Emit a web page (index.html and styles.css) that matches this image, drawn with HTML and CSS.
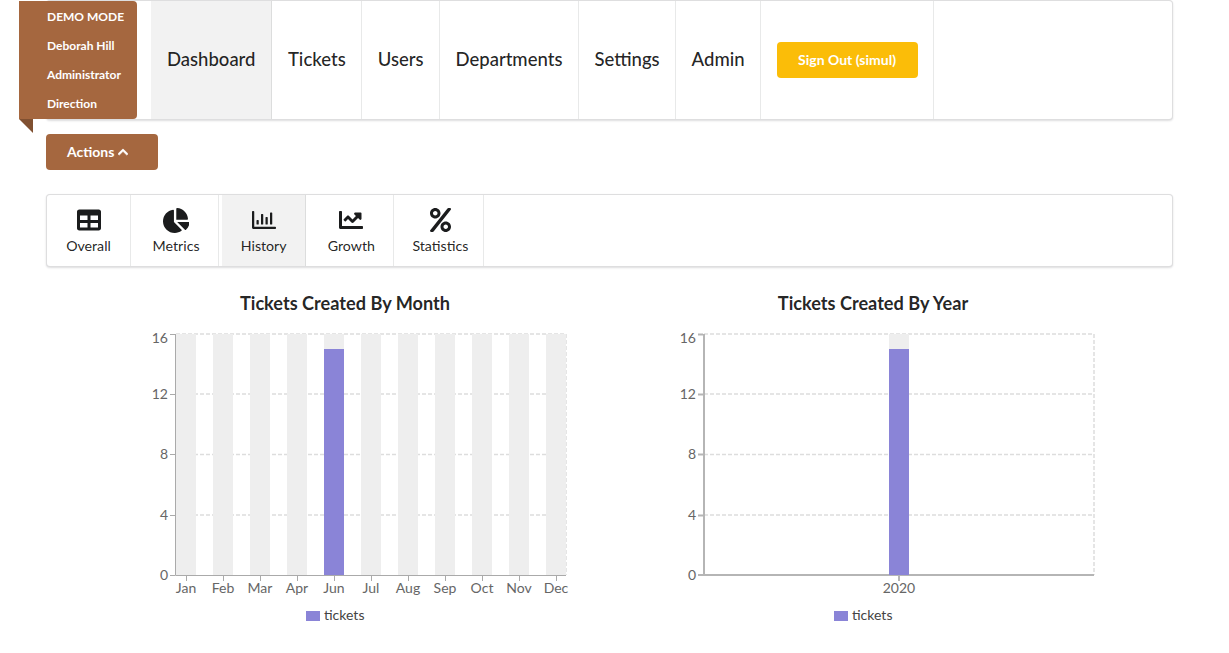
FILE: index.html
```html
<!DOCTYPE html>
<html lang="en">
<head>
<meta charset="utf-8">
<title>Dashboard</title>
<link rel="stylesheet" href="styles.css">
</head>
<body>
<div class="page">
  <nav class="menu main-menu">
    <div class="ribbon">
      <span>DEMO MODE</span>
      <span>Deborah Hill</span>
      <span>Administrator</span>
      <span>Direction</span>
    </div>
    <a class="nav-item active">Dashboard</a>
    <a class="nav-item">Tickets</a>
    <a class="nav-item">Users</a>
    <a class="nav-item">Departments</a>
    <a class="nav-item">Settings</a>
    <a class="nav-item">Admin</a>
    <div class="nav-item button-item"><button class="btn btn-yellow">Sign Out (simul)</button></div>
  </nav>

  <button class="btn btn-brown actions">Actions
    <svg class="chevron" viewBox="0 0 448 512"><path fill="currentColor" stroke="currentColor" stroke-width="30" d="M240.971 130.524l194.343 194.343c9.373 9.373 9.373 24.569 0 33.941l-22.667 22.667c-9.357 9.357-24.522 9.375-33.901.04L224 227.495 69.255 381.516c-9.379 9.335-24.544 9.317-33.901-.04l-22.667-22.667c-9.373-9.373-9.373-24.569 0-33.941L207.03 130.525c9.372-9.373 24.568-9.373 33.941-.001z"/></svg>
  </button>

  <div class="menu tabs">
    <a class="tab">
      <svg class="tab-icon" viewBox="0 0 512 512"><path d="M464 32H48C21.49 32 0 53.49 0 80v352c0 26.51 21.49 48 48 48h416c26.51 0 48-21.49 48-48V80c0-26.51-21.49-48-48-48zM224 416H64v-96h160v96zm0-160H64v-96h160v96zm224 160H288v-96h160v96zm0-160H288v-96h160v96z"/></svg>
      <span>Overall</span>
    </a>
    <a class="tab">
      <svg class="tab-icon tab-icon-wide" viewBox="0 0 544 512"><path d="M527.79 288H290.5l158.03 158.03c6.04 6.04 15.98 6.53 22.19.68 38.7-36.46 65.32-85.61 73.13-140.86 1.34-9.46-6.51-17.85-16.06-17.85zm-15.83-64.8C503.72 103.74 408.26 8.28 288.8.04 279.68-.59 272 7.1 272 16.24V240h223.77c9.14 0 16.82-7.68 16.19-16.8zM224 288V50.71c0-9.55-8.39-17.4-17.84-16.06C86.99 51.49-4.1 155.6.14 280.37 4.5 408.51 114.83 513.59 243.03 511.98c50.4-.63 96.97-16.87 135.26-44.03 7.9-5.6 8.42-17.23 1.57-24.08L224 288z"/></svg>
      <span>Metrics</span>
    </a>
    <a class="tab active">
      <svg class="tab-icon" viewBox="0 0 512 512"><path d="M396.8 352h22.4c6.4 0 12.8-6.4 12.8-12.8V108.8c0-6.4-6.4-12.8-12.8-12.8h-22.4c-6.4 0-12.8 6.4-12.8 12.8v230.4c0 6.4 6.4 12.8 12.8 12.8zm-192 0h22.4c6.4 0 12.8-6.4 12.8-12.8V140.8c0-6.4-6.4-12.8-12.8-12.8h-22.4c-6.4 0-12.8 6.4-12.8 12.8v198.4c0 6.4 6.4 12.8 12.8 12.8zm96 0h22.4c6.4 0 12.8-6.4 12.8-12.8V204.8c0-6.4-6.4-12.8-12.8-12.8h-22.4c-6.4 0-12.8 6.4-12.8 12.8v134.4c0 6.4 6.4 12.8 12.8 12.8zM496 400H48V80c0-8.84-7.16-16-16-16H16C7.16 64 0 71.16 0 80v336c0 17.67 14.33 32 32 32h464c8.84 0 16-7.16 16-16v-16c0-8.84-7.16-16-16-16zm-387.2-48h22.4c6.4 0 12.8-6.4 12.8-12.8v-70.4c0-6.4-6.4-12.8-12.8-12.8h-22.4c-6.4 0-12.8 6.4-12.8 12.8v70.4c0 6.4 6.4 12.8 12.8 12.8z"/></svg>
      <span>History</span>
    </a>
    <a class="tab">
      <svg class="tab-icon" viewBox="0 0 512 512"><path d="M496 384H64V80c0-8.84-7.16-16-16-16H16C7.16 64 0 71.16 0 80v336c0 17.67 14.33 32 32 32h464c8.84 0 16-7.16 16-16v-32c0-8.84-7.16-16-16-16zM464 96H345.94c-21.38 0-32.09 25.85-16.97 40.97l32.4 32.4L288 242.75l-73.37-73.37c-12.5-12.5-32.76-12.5-45.25 0l-68.69 68.69c-6.25 6.25-6.25 16.38 0 22.63l22.62 22.62c6.25 6.25 16.38 6.25 22.63 0L192 237.25l73.37 73.37c12.5 12.5 32.76 12.5 45.25 0l96-96 32.4 32.4c15.12 15.12 40.97 4.41 40.97-16.97V112c.01-8.84-7.15-16-15.99-16z"/></svg>
      <span>Growth</span>
    </a>
    <a class="tab">
      <svg class="tab-icon" viewBox="0 0 448 512"><path d="M112 224c61.9 0 112-50.1 112-112S173.9 0 112 0 0 50.1 0 112s50.1 112 112 112zm0-160c26.5 0 48 21.5 48 48s-21.5 48-48 48-48-21.5-48-48 21.5-48 48-48zm224 224c-61.9 0-112 50.1-112 112s50.1 112 112 112 112-50.1 112-112-50.1-112-112-112zm0 160c-26.5 0-48-21.5-48-48s21.5-48 48-48 48 21.5 48 48-21.5 48-48 48zM392.3.2l31.6.1c19.4.1 30.8 21.8 19.9 37.9L77.4 501.6a23.95 23.95 0 0 1-19.6 10.2l-33.4-.1c-19.5 0-30.9-21.9-19.7-37.8l368-463.7C377.2 4 384.5.2 392.3.2z"/></svg>
      <span>Statistics</span>
    </a>
  </div>

  <div class="charts">
    <section class="chart">
      <h3 class="chart-title">Tickets Created By Month</h3>
      <svg class="plot" viewBox="81 320 528 310">
        <g class="grid">
          <path d="M176 334H566M176 394H566M176 454.5H566M176 515H566M566 334V575"/>
        </g>
        <g class="axis">
          <path d="M175.5 334V575.5H566M170 334.5H175M170 394.5H175M170 454.5H175M170 515.5H175M170 575.5H175"/>
          <path d="M186.5 575V581M223.5 575V581M260.5 575V581M297.5 575V581M334.5 575V581M371.5 575V581M408.5 575V581M445.5 575V581M482.5 575V581M519.5 575V581M556.5 575V581"/>
        </g>
        <g class="bars-bg">
          <rect x="176" y="334" width="20" height="241"/>
          <rect x="213" y="334" width="20" height="241"/>
          <rect x="250" y="334" width="20" height="241"/>
          <rect x="287" y="334" width="20" height="241"/>
          <rect x="324" y="334" width="20" height="241"/>
          <rect x="361" y="334" width="20" height="241"/>
          <rect x="398" y="334" width="20" height="241"/>
          <rect x="435" y="334" width="20" height="241"/>
          <rect x="472" y="334" width="20" height="241"/>
          <rect x="509" y="334" width="20" height="241"/>
          <rect x="546" y="334" width="20" height="241"/>
        </g>
        <rect class="bar" x="324" y="349" width="20" height="226"/>
        <g class="y-labels">
          <text x="168" y="343">16</text>
          <text x="168" y="399">12</text>
          <text x="168" y="459">8</text>
          <text x="168" y="520">4</text>
          <text x="168" y="580">0</text>
        </g>
        <g class="x-labels">
          <text x="186" y="593">Jan</text>
          <text x="223" y="593">Feb</text>
          <text x="260" y="593">Mar</text>
          <text x="297" y="593">Apr</text>
          <text x="334" y="593">Jun</text>
          <text x="371" y="593">Jul</text>
          <text x="408" y="593">Aug</text>
          <text x="445" y="593">Sep</text>
          <text x="482" y="593">Oct</text>
          <text x="519" y="593">Nov</text>
          <text x="556" y="593">Dec</text>
        </g>
        <rect class="bar" x="306" y="611" width="14" height="10"/>
        <text class="legend" x="324" y="620">tickets</text>
      </svg>
    </section>
    <section class="chart">
      <h3 class="chart-title">Tickets Created By Year</h3>
      <svg class="plot" viewBox="609 320 528 310">
        <g class="grid">
          <path d="M704 334H1094M704 394H1094M704 454.5H1094M704 515H1094M1094 334V575"/>
        </g>
        <g class="axis thick">
          <path d="M704 334V575H1094M698 334.5H703M698 394.5H703M698 454.5H703M698 515.5H703M698 575H703"/>
          <path d="M899 575V581"/>
        </g>
        <g class="bars-bg">
          <rect x="889" y="334" width="20" height="241"/>
        </g>
        <rect class="bar" x="889" y="349" width="20" height="226"/>
        <g class="y-labels">
          <text x="696" y="343">16</text>
          <text x="696" y="399">12</text>
          <text x="696" y="459">8</text>
          <text x="696" y="520">4</text>
          <text x="696" y="580">0</text>
        </g>
        <g class="x-labels">
          <text x="899" y="593">2020</text>
        </g>
        <rect class="bar" x="834" y="611" width="14" height="10"/>
        <text class="legend" x="852" y="620">tickets</text>
      </svg>
    </section>
  </div>
</div>
</body>
</html>
```
FILE: styles.css
```css
* { box-sizing: border-box; }
html, body { margin: 0; padding: 0; background: #fff; }
body {
  font-family: Lato, "Liberation Sans", sans-serif;
  font-size: 14px;
  color: rgba(0, 0, 0, .87);
  overflow: hidden;
}
.page { width: 1127px; margin-left: 46px; }
.menu {
  display: flex;
  background: #fff;
  border: 1px solid rgba(34, 36, 38, .15);
  border-radius: 4px;
  box-shadow: 0 1px 2px 0 rgba(34, 36, 38, .15);
}
.main-menu { height: 120px; }
.ribbon {
  position: relative;
  flex: none;
  width: 118px;
  height: 118px;
  margin: 0 14px 0 -28px;
  padding: 8px 0 0 28px;
  display: flex;
  flex-direction: column;
  gap: 14px;
  background: #a5673f;
  color: #fff;
  font-size: 12px;
  line-height: 15px;
  font-weight: 700;
  border-radius: 0 4px 4px 0;
}
.ribbon::after {
  content: "";
  position: absolute;
  left: 0;
  top: 100%;
  border-style: solid;
  border-width: 0 14px 14px 0;
  border-color: transparent #805031 transparent transparent;
}
.nav-item {
  display: flex;
  align-items: center;
  padding: 0 15.5px 2px;
  font-size: 18.5px;
  font-weight: 500;
  color: rgba(0, 0, 0, .87);
  border-right: 1px solid rgba(34, 36, 38, .1);
}
.nav-item.active { background: #f2f2f2; padding: 0 16px 2px; }
.button-item { padding-bottom: 0; }
.btn {
  border: 0;
  border-radius: 4px;
  font-family: inherit;
  font-size: 14px;
  font-weight: 700;
  color: #fff;
  height: 36px;
}
.btn-yellow { background: #fbbd08; width: 141px; padding: 0 0 2px; }
.btn-brown { background: #a5673f; }
.actions {
  display: flex;
  align-items: center;
  gap: 4px;
  width: 112px;
  margin-top: 14px;
  padding: 0 0 2px 21px;
}
.chevron { width: 10px; height: 12px; margin-top: 2px; }
.tabs { height: 73px; margin-top: 24px; }
.tab {
  display: flex;
  flex-direction: column;
  align-items: center;
  min-width: 84px;
  padding: 13px 15px 0;
  margin-left: 3.6px;
  font-size: 14.2px;
  border-right: 1px solid rgba(34, 36, 38, .1);
  color: rgba(0, 0, 0, .87);
}
.tab:first-child { margin-left: 0; }
.tab.active { background: #f2f2f2; }
.tab-icon { height: 24px; fill: #1b1c1d; margin-bottom: 5px; display: block; }
.tab-icon-wide { height: 25px; margin-bottom: 4px; }
.charts {
  display: grid;
  grid-template-columns: 528px 528px;
  padding: 0 35px;
}
.chart { display: flex; flex-direction: column; align-items: center; }
.chart-title {
  margin: 0;
  height: 53px;
  padding-top: 25px;
  font-size: 18.15px;
  line-height: 22px;
  font-weight: 700;
  color: rgba(0, 0, 0, .87);
}
.plot { width: 528px; height: 310px; display: block; }
.grid path { fill: none; stroke: #ddd; stroke-width: 1.5; stroke-dasharray: 4 2; }
.axis path { fill: none; stroke: #aaa; stroke-width: 1; }
.axis.thick path { stroke: #b5b5b5; stroke-width: 2; }
.bars-bg rect { fill: #eee; }
.bar { fill: #8a84d7; }
.y-labels text { text-anchor: end; font-size: 14px; fill: #666; }
.x-labels text { text-anchor: middle; font-size: 14px; fill: #666; }
.legend { font-size: 14px; fill: #444; }
```
